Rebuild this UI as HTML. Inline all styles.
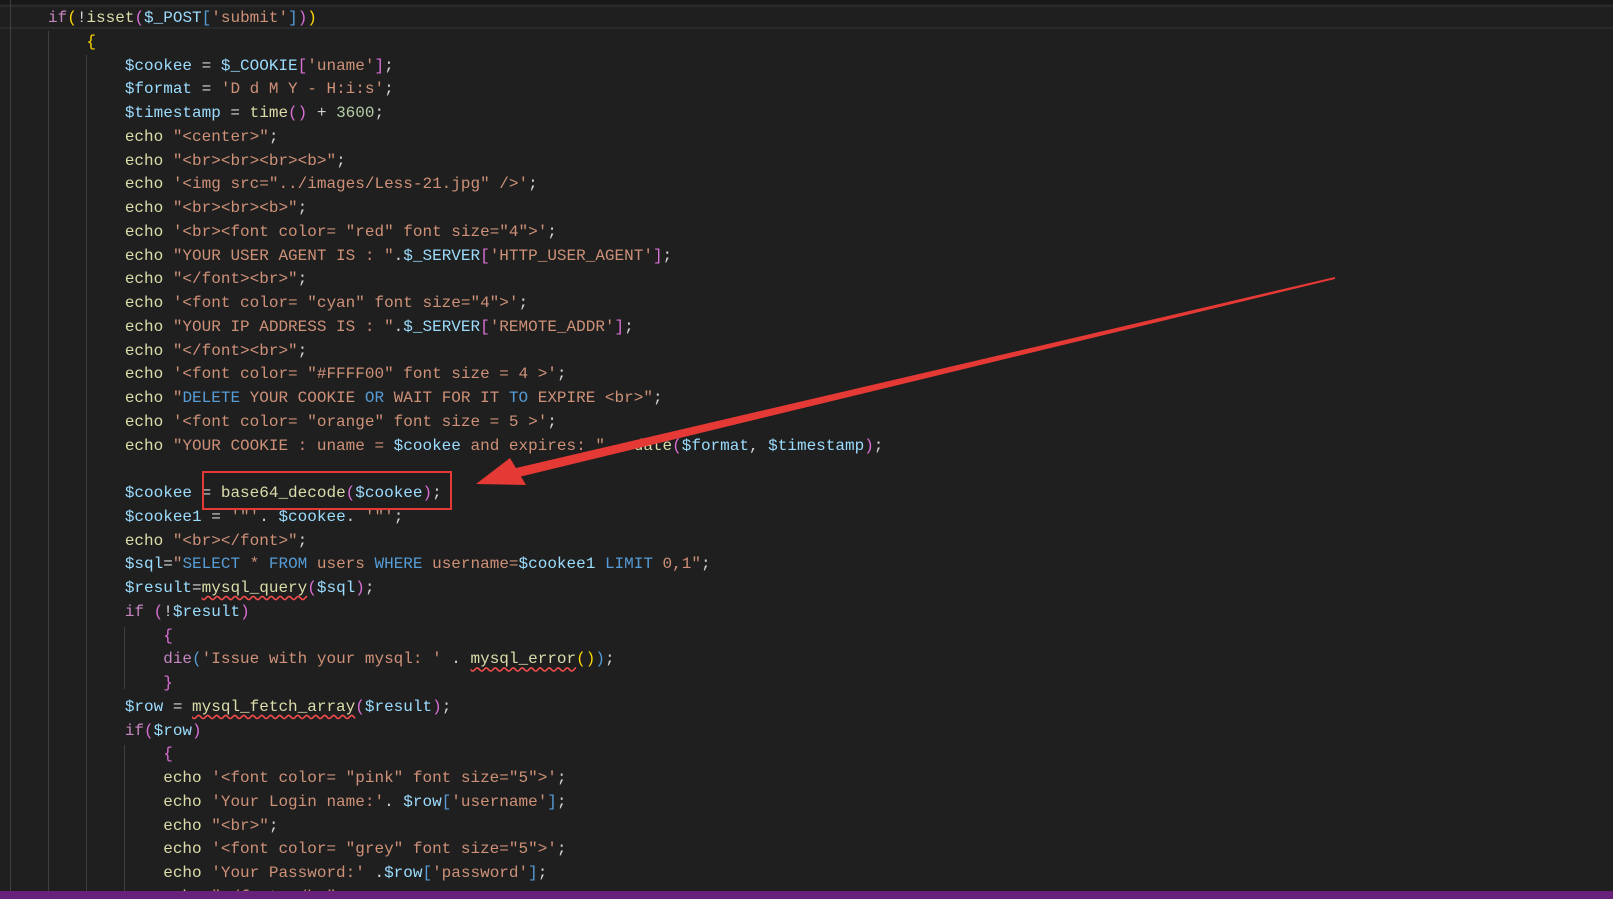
<!DOCTYPE html>
<html><head><meta charset="utf-8"><style>
html,body{margin:0;padding:0;background:#1f1f1f;width:1613px;height:899px;overflow:hidden;position:relative}
.top{position:absolute;left:0;top:0;width:1613px;height:4px;background:#181818}
.cur{position:absolute;left:0;top:5px;width:1613px;height:24px;border-top:2px solid #2a2a2a;border-bottom:2px solid #2a2a2a;box-sizing:border-box}
.g{position:absolute;width:1px;background:#404040}
pre{position:absolute;left:48px;top:7px;margin:0;font-family:"Liberation Mono",monospace;font-size:16px;line-height:23.75px;color:#d4d4d4}
.k{color:#c586c0}.f{color:#dcdcaa}.s{color:#ce9178}.v{color:#9cdcfe}.n{color:#b5cea8}.b{color:#569cd6}.y{color:#ffd700}.p{color:#da70d6}
.w{text-decoration:underline wavy #f14c4c;text-underline-offset:3px}
.status{position:absolute;left:0;top:891px;width:1613px;height:8px;background:#68217a}
.box{position:absolute;left:202px;top:471px;width:250px;height:39px;border:2.5px solid #e53935;box-sizing:border-box}
</style></head><body>
<div class="top"></div>
<div class="cur"></div>
<div class="g" style="left:10px;top:0;height:891px"></div>
<div class="g" style="left:48px;top:31px;height:860px"></div>
<div class="g" style="left:86px;top:55px;height:836px"></div>
<div class="g" style="left:124px;top:627px;height:62px"></div>
<div class="g" style="left:124px;top:745px;height:146px"></div>
<pre><span class="k">if</span><span class="y">(</span>!<span class="f">isset</span><span class="p">(</span><span class="v">$_POST</span><span class="b">[</span><span class="s">'submit'</span><span class="b">]</span><span class="p">)</span><span class="y">)</span>
    <span class="y">{</span>
        <span class="v">$cookee</span> = <span class="v">$_COOKIE</span><span class="p">[</span><span class="s">'uname'</span><span class="p">]</span>;
        <span class="v">$format</span> = <span class="s">'D d M Y - H:i:s'</span>;
        <span class="v">$timestamp</span> = <span class="f">time</span><span class="p">()</span> + <span class="n">3600</span>;
        <span class="f">echo</span> <span class="s">"&lt;center&gt;"</span>;
        <span class="f">echo</span> <span class="s">"&lt;br&gt;&lt;br&gt;&lt;br&gt;&lt;b&gt;"</span>;
        <span class="f">echo</span> <span class="s">'&lt;img src="../images/Less-21.jpg" /&gt;'</span>;
        <span class="f">echo</span> <span class="s">"&lt;br&gt;&lt;br&gt;&lt;b&gt;"</span>;
        <span class="f">echo</span> <span class="s">'&lt;br&gt;&lt;font color= "red" font size="4"&gt;'</span>;
        <span class="f">echo</span> <span class="s">"YOUR USER AGENT IS : "</span>.<span class="v">$_SERVER</span><span class="p">[</span><span class="s">'HTTP_USER_AGENT'</span><span class="p">]</span>;
        <span class="f">echo</span> <span class="s">"&lt;/font&gt;&lt;br&gt;"</span>;
        <span class="f">echo</span> <span class="s">'&lt;font color= "cyan" font size="4"&gt;'</span>;
        <span class="f">echo</span> <span class="s">"YOUR IP ADDRESS IS : "</span>.<span class="v">$_SERVER</span><span class="p">[</span><span class="s">'REMOTE_ADDR'</span><span class="p">]</span>;
        <span class="f">echo</span> <span class="s">"&lt;/font&gt;&lt;br&gt;"</span>;
        <span class="f">echo</span> <span class="s">'&lt;font color= "#FFFF00" font size = 4 &gt;'</span>;
        <span class="f">echo</span> <span class="s">"</span><span class="b">DELETE</span><span class="s"> YOUR COOKIE </span><span class="b">OR</span><span class="s"> WAIT FOR IT </span><span class="b">TO</span><span class="s"> EXPIRE &lt;br&gt;"</span>;
        <span class="f">echo</span> <span class="s">'&lt;font color= "orange" font size = 5 &gt;'</span>;
        <span class="f">echo</span> <span class="s">"YOUR COOKIE : uname = </span><span class="v">$cookee</span><span class="s"> and expires: "</span> . <span class="f">date</span><span class="p">(</span><span class="v">$format</span>, <span class="v">$timestamp</span><span class="p">)</span>;

        <span class="v">$cookee</span> = <span class="f">base64_decode</span><span class="p">(</span><span class="v">$cookee</span><span class="p">)</span>;
        <span class="v">$cookee1</span> = <span class="s">'"'</span>. <span class="v">$cookee</span>. <span class="s">'"'</span>;
        <span class="f">echo</span> <span class="s">"&lt;br&gt;&lt;/font&gt;"</span>;
        <span class="v">$sql</span>=<span class="s">"</span><span class="b">SELECT</span><span class="s"> * </span><span class="b">FROM</span><span class="s"> users </span><span class="b">WHERE</span><span class="s"> username=</span><span class="v">$cookee1</span><span class="s"> </span><span class="b">LIMIT</span><span class="s"> 0,1"</span>;
        <span class="v">$result</span>=<span class="f w">mysql_query</span><span class="p">(</span><span class="v">$sql</span><span class="p">)</span>;
        <span class="k">if</span> <span class="p">(</span>!<span class="v">$result</span><span class="p">)</span>
            <span class="p">{</span>
            <span class="k">die</span><span class="b">(</span><span class="s">'Issue with your mysql: '</span> . <span class="f w">mysql_error</span><span class="y">()</span><span class="b">)</span>;
            <span class="p">}</span>
        <span class="v">$row</span> = <span class="f w">mysql_fetch_array</span><span class="p">(</span><span class="v">$result</span><span class="p">)</span>;
        <span class="k">if</span><span class="p">(</span><span class="v">$row</span><span class="p">)</span>
            <span class="p">{</span>
            <span class="f">echo</span> <span class="s">'&lt;font color= "pink" font size="5"&gt;'</span>;
            <span class="f">echo</span> <span class="s">'Your Login name:'</span>. <span class="v">$row</span><span class="b">[</span><span class="s">'username'</span><span class="b">]</span>;
            <span class="f">echo</span> <span class="s">"&lt;br&gt;"</span>;
            <span class="f">echo</span> <span class="s">'&lt;font color= "grey" font size="5"&gt;'</span>;
            <span class="f">echo</span> <span class="s">'Your Password:'</span> .<span class="v">$row</span><span class="b">[</span><span class="s">'password'</span><span class="b">]</span>;
            <span class="f">echo</span> <span class="s">"&lt;/font&gt;&lt;/b&gt;"</span>;
</pre>
<div class="box"></div>
<svg style="position:absolute;left:0;top:0" width="1613" height="899">
<polygon points="1335,277 516,468 519,477 1335,279" fill="#e53935"/>
<polygon points="476,484 510,458 526,485" fill="#e53935"/>
</svg>
<div class="status"></div>
</body></html>
